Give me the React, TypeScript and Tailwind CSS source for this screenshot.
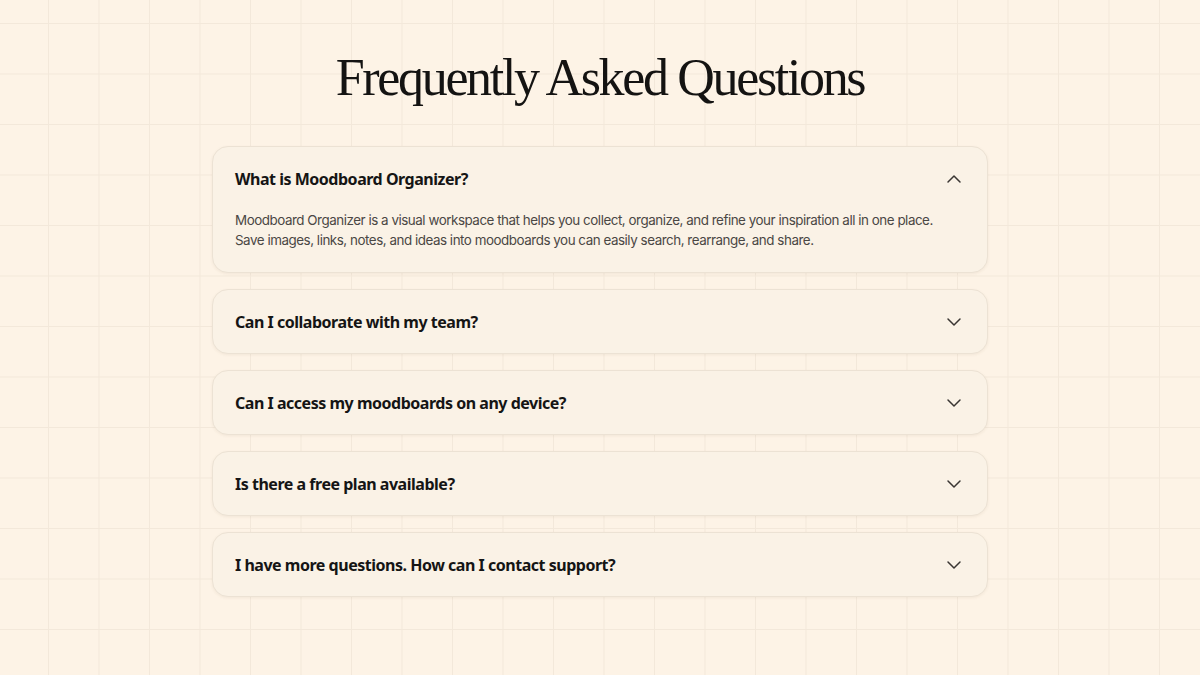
import { useState } from "react";
import { ChevronDown, ChevronUp } from "lucide-react";

const faqs = [
  {
    q: "What is Moodboard Organizer?",
    a: "Moodboard Organizer is a visual workspace that helps you collect, organize, and refine your inspiration all in one place. Save images, links, notes, and ideas into moodboards you can easily search, rearrange, and share.",
  },
  {
    q: "Can I collaborate with my team?",
    a: "Yes. Invite teammates to any moodboard, leave comments on pins, and see changes as they happen.",
  },
  {
    q: "Can I access my moodboards on any device?",
    a: "Your boards sync across desktop, tablet and phone, so your ideas are always with you.",
  },
  {
    q: "Is there a free plan available?",
    a: "There is a free plan with up to three moodboards. Upgrade any time for unlimited boards and storage.",
  },
  {
    q: "I have more questions. How can I contact support?",
    a: "Reach out from the help menu in the app or email our support team and we'll get back to you within a day.",
  },
];

export default function App() {
  const [open, setOpen] = useState<number | null>(0);

  return (
    <main
      className="w-full min-h-[675px] bg-[#fdf3e6] bg-[linear-gradient(to_right,#f3e8da_1px,transparent_1px),linear-gradient(to_bottom,#f3e8da_1px,transparent_1px)] bg-[size:50.5px_50.5px] bg-[position:48px_23px] pt-[50px] pb-16"
      style={{ fontFamily: '"Noto Sans", "Open Sans", sans-serif' }}
    >
      <h1 className="text-center text-[52px] leading-[56px] tracking-[-0.045em] text-[#141312] font-['Liberation_Serif',serif]">
        Frequently Asked Questions
      </h1>

      <div className="w-[776px] mx-auto mt-[40px] flex flex-col gap-4">
        {faqs.map((item, i) => {
          const isOpen = open === i;
          return (
            <div
              key={item.q}
              className="rounded-2xl border border-[#ece2d4] bg-[#faf2e6] shadow-[0_1px_3px_rgba(120,90,50,0.08)]"
            >
              <button
                onClick={() => setOpen(isOpen ? null : i)}
                className="w-full flex items-center justify-between pl-[22px] pr-[21px] py-[19.5px] text-left"
              >
                <span className="text-base leading-6 font-bold tracking-[-0.03em] text-[#151515]">
                  {item.q}
                </span>
                {isOpen ? (
                  <ChevronUp className="w-6 h-6 text-[#3a3633]" strokeWidth={1.5} />
                ) : (
                  <ChevronDown className="w-6 h-6 text-[#3a3633]" strokeWidth={1.5} />
                )}
              </button>
              {isOpen && (
                <p className="px-[22px] pb-[22px] text-[13.4px] leading-5 tracking-[-0.035em] text-[#4a4744] font-['Inter',sans-serif]">
                  {item.a}
                </p>
              )}
            </div>
          );
        })}
      </div>
    </main>
  );
}
